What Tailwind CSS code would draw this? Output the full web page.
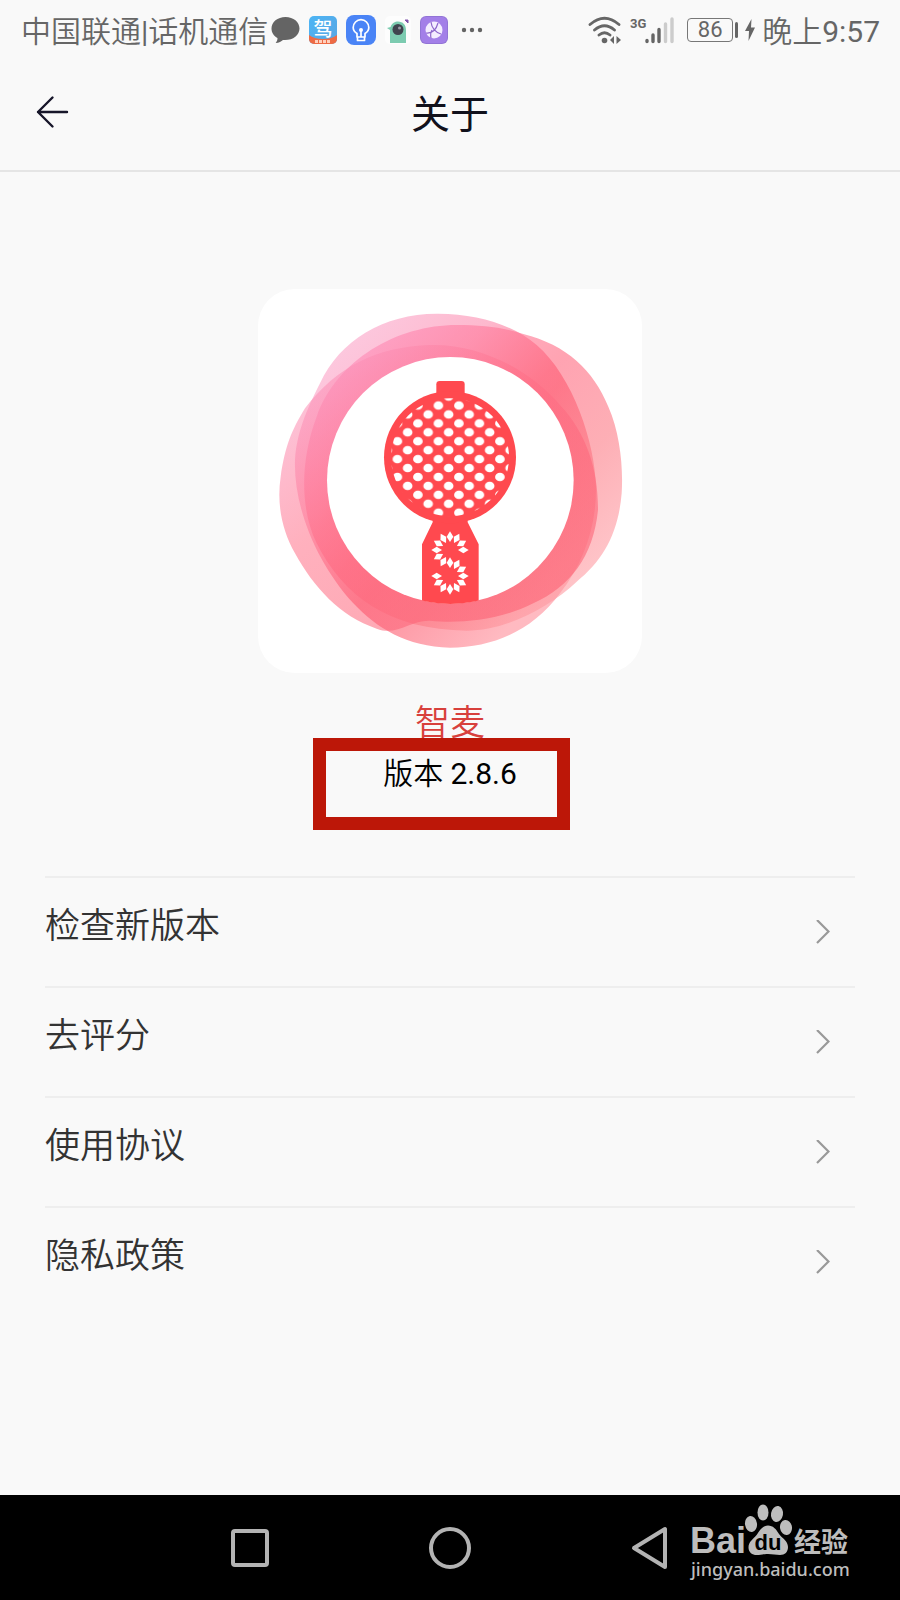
<!DOCTYPE html>
<html lang="zh-CN">
<head>
<meta charset="utf-8">
<meta name="viewport" content="width=device-width, initial-scale=1">
<title>关于</title>
<script src="https://cdn.jsdelivr.net/npm/@tailwindcss/browser@4"></script>
</head>
<body class="bg-[#f9f9f9] font-['Roboto','Noto_Sans_CJK_SC',sans-serif]">
<div class="flex min-h-screen flex-col">

  <!-- Status bar -->
  <div class="flex h-[60px] items-center justify-between pr-5 pl-[21px] text-[30px] font-[350] text-[#666]">
    <div class="flex items-center gap-[9px]">
      <span class="-mr-1.5 pt-0.5 whitespace-nowrap">中国联通<span class="font-normal">|</span>话机通信</span>
      <svg class="h-7 w-[29px]" viewBox="0 0 29 28" fill="#646464"><path d="M14.500 1C6.500 1 .5 6 .5 12.500c0 4 2.300 7.500 6 9.600 0 2-.6 3.600-1.800 4.900 3.300-.2 5.600-1.400 7.300-3 9.200.9 16.500-4.500 16.500-11.500C28.500 6 22.500 1 14.500 1z"/></svg>
      <svg class="size-7" viewBox="0 0 28 28">
        <defs><clipPath id="drive"><rect width="28" height="28" rx="5"/></clipPath>
        <linearGradient id="sky" x2="1" y2="1"><stop stop-color="#4cb5f5"/><stop offset="1" stop-color="#5aa5e2"/></linearGradient></defs>
        <g clip-path="url(#drive)"><rect width="28" height="28" fill="url(#sky)"/><path d="M0 19q5 4 14 4t14-4v9H0z" fill="#ee6b45"/>
        <text x="14" y="20" text-anchor="middle" font-size="19" font-weight="500" fill="#fff" font-family="Noto Sans CJK SC">驾</text>
        <path d="M6 25.500h16" stroke="#ffd0bd" stroke-width="3" stroke-dasharray="3 1"/></g>
      </svg>
      <svg class="size-[30px]" viewBox="0 0 30 30"><rect width="30" height="30" rx="8" fill="#4a84f6"/><g fill="none" stroke="#fff" stroke-width="1.700" stroke-linejoin="round"><path d="M11 22v-3.500C8.500 17 7.200 15 7.200 12.500a7.800 7.800 0 0 1 15.600 0c0 2.500-1.300 4.500-3.800 6V22zM15 15v7M11.500 22v3.500h7V22"/></g><circle cx="15" cy="15" r="2" fill="#fff"/></svg>
      <svg class="h-7 w-[26px]" viewBox="0 0 26 28"><rect width="26" height="28" rx="5" fill="#fdfdfd"/><path d="M5 27V14l-3-2 3.500-1C7 7 10 5.500 13 5.500c5 0 8 3.500 8 8.500v13z" fill="#7ccbb0"/><circle cx="13" cy="13.500" r="5.500" fill="#40444f"/><circle cx="14.500" cy="12" r="1.500" fill="#9a9ca7"/><path d="m20 4 3 3V4z" fill="#8055aa" stroke="#8055aa"/></svg>
      <svg class="size-7" viewBox="0 0 28 28"><rect width="28" height="28" rx="6" fill="#9274d6"/><rect x="1" y="1" width="26" height="26" rx="5" fill="#a37fe8"/><circle cx="14" cy="14" r="8.500" fill="#f4edff"/><path d="M11 6q1 9 10 12M6 17q9 1 12-10M11 22q-1-5 1-8" fill="none" stroke="#8d66cb" stroke-width="1.200"/></svg>
      <svg class="ml-1 h-6 w-[22px]" viewBox="0 0 22 24" fill="#646464"><circle cx="3" cy="12" r="2.200"/><circle cx="11" cy="12" r="2.200"/><circle cx="19" cy="12" r="2.200"/></svg>
    </div>
    <div class="flex items-center">
      <svg class="h-7 w-[34px]" viewBox="0 0 34 28"><g fill="none" stroke="#666" stroke-width="2.800" stroke-linecap="round"><path d="M2 8.500Q16.500-4 31 8.500M6.500 14q10-8.500 20 0M11 19q5.500-4.500 11 0"/></g><circle cx="16.500" cy="24.500" r="2.800" fill="#666"/><path d="M26 20v8l-4-4zM28.500 20v8l4.500-4z" fill="#666"/></svg>
      <svg class="ml-2 h-7 w-[45px]" viewBox="0 0 45 28"><text x="0" y="12" font-family="Roboto" font-size="13" font-weight="700" fill="#666">3G</text><g stroke-linecap="round" stroke-width="3.400"><path d="M17 24.500v1M23 19v6.500M29 13.500v12" stroke="#666"/><path d="M35.500 8v17.500M42 3v22.500" stroke="#ccc"/></g></svg>
      <div class="ml-3 flex h-6 w-[46px] items-center justify-center rounded-[4px] border-[1px] border-[#777] text-[22px] leading-none font-normal">86</div>
      <div class="ml-0.5 h-4 w-[3px] rounded-sm bg-[#666]"></div>
      <svg class="ml-1.5 h-6 w-3" viewBox="0 0 12 24" fill="#666"><path d="M7.500 1 1 13h4L4.500 23 11 9.500H7z"/></svg>
      <span class="ml-1.5 pt-0.5 whitespace-nowrap">晚上<span class="font-normal">9:57</span></span>
    </div>
  </div>

  <!-- Title bar -->
  <header class="grid h-[112px] grid-cols-[1fr_auto_1fr] items-center border-b-2 border-[#e5e5e5]">
    <button type="button" aria-label="返回" class="mb-1 ml-[34px] flex size-9 items-center justify-center">
      <svg class="size-9" viewBox="0 0 36 36" fill="none" stroke="#17162a" stroke-width="2.400" stroke-linecap="round" stroke-linejoin="round"><path d="M33 17H4M18.500 2.500 4 17l14.500 14.500"/></svg>
    </button>
    <h1 class="text-[39px] font-normal text-[#11111c]">关于</h1>
  </header>

  <main class="flex grow flex-col">
    <section class="flex flex-col items-center pt-[117px]">
      <svg class="size-96" viewBox="24 27 1152 1152" role="img" aria-label="智麦">
        <defs>
          <linearGradient id="ga" x1=".15" y1=".1" x2=".85" y2=".8"><stop stop-color="#fba3c8"/><stop offset=".3" stop-color="#fc8aad"/><stop offset=".6" stop-color="#fc4058"/><stop offset="1" stop-color="#ff8c98"/></linearGradient>
          <linearGradient id="gb" x1=".1" y1=".1" x2=".9" y2=".9"><stop stop-color="#ff8dbb"/><stop offset=".45" stop-color="#ff667e"/><stop offset=".7" stop-color="#fc7984"/><stop offset="1" stop-color="#ffa5ab"/></linearGradient>
          <linearGradient id="gc" x1=".1" y1=".1" x2=".8" y2=".9"><stop stop-color="#fb93bd"/><stop offset=".4" stop-color="#ff7088"/><stop offset="1" stop-color="#fc5b6e"/></linearGradient>
          <pattern id="mesh" patternUnits="userSpaceOnUse" x="565.250" y="376.500" width="61.500" height="53.600"><g fill="#fff"><ellipse rx="14.500" ry="13"/><ellipse cx="61.500" rx="14.500" ry="13"/><ellipse cy="53.600" rx="14.500" ry="13"/><ellipse cx="61.500" cy="53.600" rx="14.500" ry="13"/><ellipse cx="30.750" cy="26.800" rx="14.500" ry="13"/></g></pattern>
          <clipPath id="inner"><circle cx="601" cy="601" r="371"/></clipPath>
          <path id="petal" d="M0-56 10-40 0-24-10-40z"/>
        </defs>
        <rect x="24" y="27" width="1152" height="1152" rx="110" fill="#fff"/>
        <path fill="url(#ga)" fill-opacity=".6" d="M560 101C680 100 790 135 860 195 970 290 1035 490 1038 620 1040 740 1000 850 930 940 850 1050 730 1103 600 1103 470 1100 380 1045 310 970 200 850 130 680 135 540 140 450 180 370 210 310 270 180 400 102 560 101z"/>
        <path fill="url(#gb)" fill-opacity=".6" d="M620 135C700 135 760 142 820 162 950 195 1030 270 1075 380 1110 460 1120 560 1115 640 1105 760 1060 840 980 905 900 980 770 1052 650 1052 420 1050 280 950 200 790 150 690 150 540 200 410 260 240 440 135 620 135z"/>
        <path fill="url(#gc)" fill-opacity=".55" d="M540 195C700 190 850 280 930 375 1010 460 1045 570 1044 690 1030 830 960 920 850 970 740 1025 620 1030 540 1022 480 1020 440 1070 380 1046 270 1010 190 920 135 820 95 750 80 670 92 590 105 500 125 450 165 385 260 260 380 200 540 195z"/>
        <circle cx="601" cy="601" r="370" fill="#fff"/>
        <g clip-path="url(#inner)" fill="#ff494f"><path d="M548 700h105v27l33 66v190H516V793l32-66z"/></g>
        <path d="M559 350v-37q0-10 10-10h65q10 0 10 10v37z" fill="#ff494f"/>
        <circle cx="600" cy="532" r="198" fill="#ff494f"/>
        <circle cx="600" cy="532" r="177" fill="url(#mesh)"/>
        <g fill="#fff" transform="translate(600 810)"><use href="#petal" transform="rotate(90)"/><use href="#petal" transform="rotate(60)"/><use href="#petal" transform="rotate(30)"/><use href="#petal"/><use href="#petal" transform="rotate(-30)"/><use href="#petal" transform="rotate(-60)"/><use href="#petal" transform="rotate(-90)"/><use href="#petal" transform="rotate(-120)"/><use href="#petal" transform="rotate(-150)"/></g>
        <g fill="#fff" transform="translate(600 888)"><use href="#petal"/><use href="#petal" transform="rotate(30)"/><use href="#petal" transform="rotate(60)"/><use href="#petal" transform="rotate(90)"/><use href="#petal" transform="rotate(120)"/><use href="#petal" transform="rotate(150)"/><use href="#petal" transform="rotate(180)"/><use href="#petal" transform="rotate(-150)"/><use href="#petal" transform="rotate(-120)"/><use href="#petal" transform="rotate(-90)"/></g>
      </svg>
      <h2 class="mt-[26px] text-[35px] leading-[50px] font-[350] text-[#d8403c]">智麦</h2>
      <div class="relative h-[127px]">
        <p class="text-[30px] leading-[50px] font-[350] text-black">版本 <span class="font-normal">2.8.6</span></p>
        <!-- Highlight frame around the version number -->
        <div class="absolute -top-[11px] -left-[70px] h-[92px] w-[257px] border-[13px] border-[#bc1708]"></div>
      </div>
    </section>

    <nav class="mx-[45px] text-[35px] font-[350] text-[#333]">
      <a href="#update" class="flex h-[110px] items-center justify-between border-t-2 border-[#eee] pr-[25px]"><span class="pb-2.5">检查新版本</span><svg class="h-6 w-3.5" viewBox="0 0 14 24" fill="none" stroke="#999" stroke-width="2.200"><path d="m1 0 11.500 11.500L1 23"/></svg></a>
      <a href="#rate" class="flex h-[110px] items-center justify-between border-t-2 border-[#eee] pr-[25px]"><span class="pb-2.5">去评分</span><svg class="h-6 w-3.5" viewBox="0 0 14 24" fill="none" stroke="#999" stroke-width="2.200"><path d="m1 0 11.500 11.500L1 23"/></svg></a>
      <a href="#terms" class="flex h-[110px] items-center justify-between border-t-2 border-[#eee] pr-[25px]"><span class="pb-2.5">使用协议</span><svg class="h-6 w-3.5" viewBox="0 0 14 24" fill="none" stroke="#999" stroke-width="2.200"><path d="m1 0 11.500 11.500L1 23"/></svg></a>
      <a href="#privacy" class="flex h-[110px] items-center justify-between border-t-2 border-[#eee] pr-[25px]"><span class="pb-2.5">隐私政策</span><svg class="h-6 w-3.5" viewBox="0 0 14 24" fill="none" stroke="#999" stroke-width="2.200"><path d="m1 0 11.500 11.500L1 23"/></svg></a>
    </nav>
  </main>

  <!-- System navigation -->
  <footer class="relative flex h-[105px] items-center justify-center gap-[156px] bg-black">
    <button type="button" aria-label="最近任务"><svg class="size-11" viewBox="0 0 44 44" fill="none" stroke="#b3b3b3" stroke-width="4"><rect x="5" y="5" width="34" height="34" rx="2"/></svg></button>
    <button type="button" aria-label="主屏幕"><svg class="size-11" viewBox="0 0 44 44" fill="none" stroke="#b3b3b3" stroke-width="4"><circle cx="22" cy="22" r="19"/></svg></button>
    <button type="button" aria-label="返回上一级"><svg class="size-11" viewBox="0 0 44 44" fill="none" stroke="#b3b3b3" stroke-width="4" stroke-linejoin="round"><path d="M6 22 37 3v38z"/></svg></button>
    <!-- Watermark -->
    <div class="absolute top-2 right-[46px] w-[164px] text-[#bdbdbd]">
      <svg class="block h-[54px] w-full" viewBox="0 0 164 54" fill="#bdbdbd">
        <text x="0" y="50" font-family="Liberation Sans" font-size="36" font-weight="700">Bai</text>
        <ellipse cx="61" cy="21" rx="6" ry="8" transform="rotate(-8 61 21)"/><ellipse cx="73" cy="9.500" rx="5.500" ry="8"/><ellipse cx="87" cy="11" rx="6" ry="8" transform="rotate(10 87 11)"/><ellipse cx="96" cy="24.500" rx="6" ry="7.500" transform="rotate(-8 96 24.500)"/>
        <path d="M78 22.500c-5 0-8 4-11 9-4 5-8.500 7-8.500 13 0 5 4 7.500 8 7.500 5 0 7-1 11.500-1s8 1 12 1c5 0 8-3 8-8 0-6-6-9-9-13-3-5-6-8.500-11-8.500z"/>
        <text x="78" y="47" text-anchor="middle" font-family="Liberation Sans" font-size="22" font-weight="700" fill="#000">du</text>
        <text x="104" y="49" font-family="Noto Sans CJK SC" font-size="27" font-weight="700">经验</text>
      </svg>
      <div class="pl-px font-['Noto_Sans',sans-serif] text-[18px] leading-6 font-medium whitespace-nowrap">jingyan.baidu.com</div>
    </div>
  </footer>
</div>
</body>
</html>
